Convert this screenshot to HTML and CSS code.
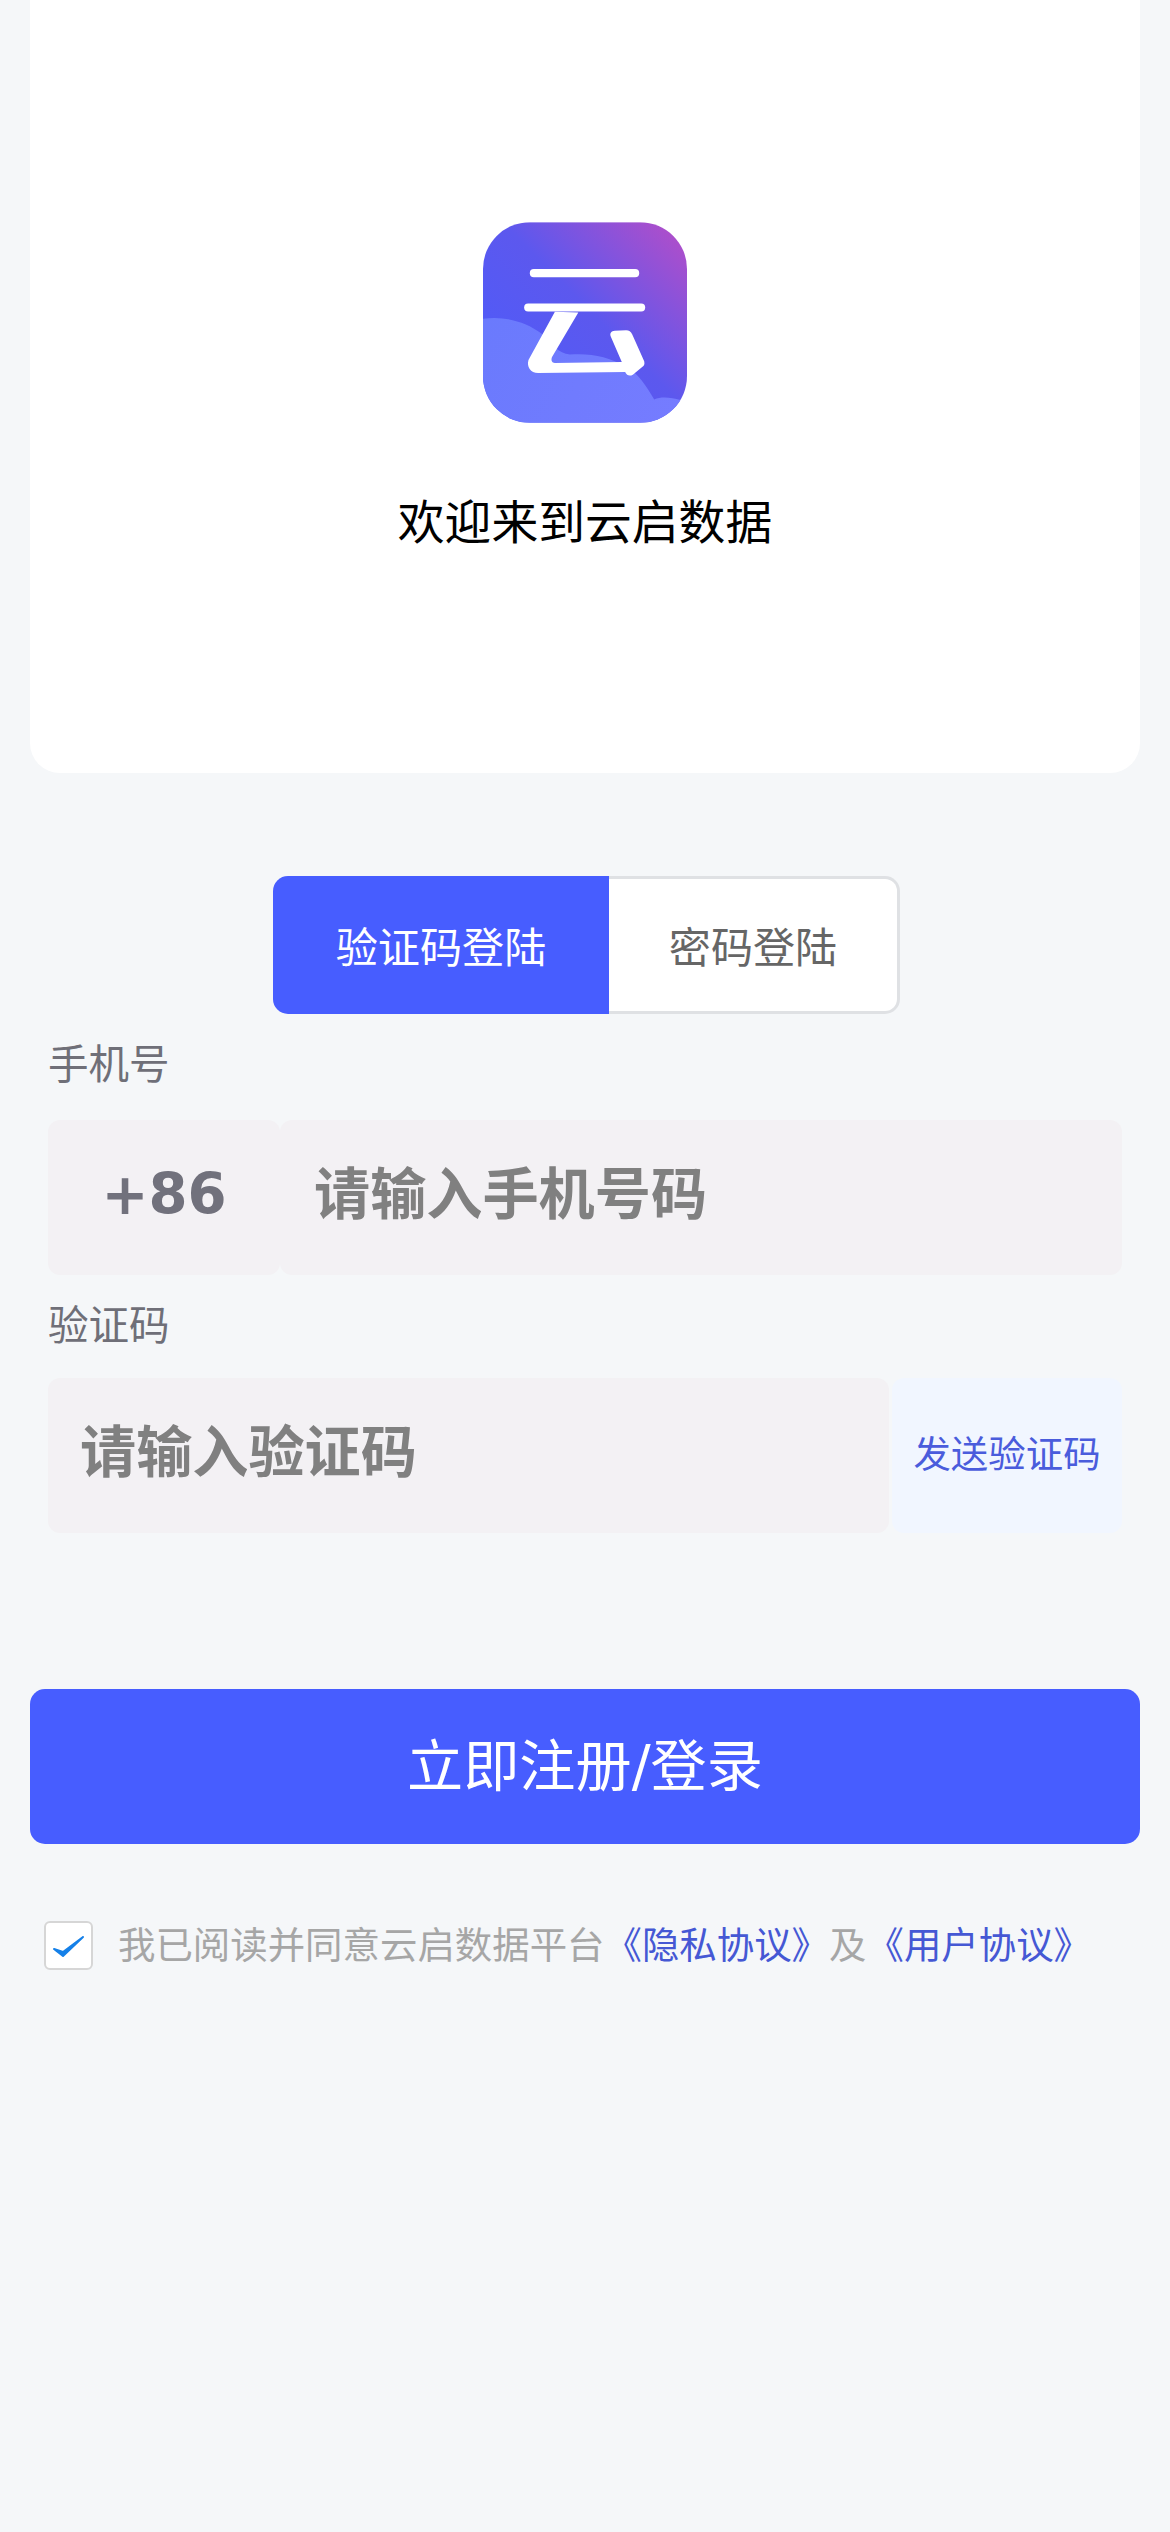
FILE: index.html
```html
<!DOCTYPE html>
<html lang="zh-CN">
<head>
<meta charset="utf-8">
<title>欢迎来到云启数据</title>
<link rel="stylesheet" href="styles.css">
</head>
<body>
<main class="page">
  <section class="hero">
    <svg class="logo" viewBox="0 0 610 600" aria-hidden="true">
      <defs>
        <linearGradient id="logoBg" x1="610" y1="0" x2="0" y2="600" gradientUnits="userSpaceOnUse">
          <stop offset="0" stop-color="#b84dc6"/>
          <stop offset="0.46" stop-color="#5c58ee"/>
          <stop offset="1" stop-color="#4a5cfd"/>
        </linearGradient>
        <linearGradient id="logoCloud" x1="0" y1="300" x2="610" y2="600" gradientUnits="userSpaceOnUse">
          <stop offset="0" stop-color="#6a7afd"/>
          <stop offset="1" stop-color="#767cff"/>
        </linearGradient>
        <clipPath id="logoClip"><rect width="610" height="600" rx="140"/></clipPath>
      </defs>
      <g clip-path="url(#logoClip)">
        <rect width="610" height="600" fill="url(#logoBg)"/>
        <path fill="url(#logoCloud)" d="M0 289C60 280 125 295 178 335C205 365 225 392 260 396C320 390 380 405 420 428C465 448 490 495 512 530C535 520 565 525 590 532L610 600H0Z"/>
      </g>
      <rect x="140" y="140" width="327" height="25" rx="12" fill="#fff"/>
      <rect x="123" y="243" width="362" height="24" rx="12" fill="#fff"/>
      <path fill="#fff" d="M215 268L285 270L206 404C203 414 206 421 215 421L415 418L382 342C378 332 384 326 394 325L428 323C437 323 442 327 446 335L482 416C484 424 482 430 476 433L448 456C438 462 430 458 425 448L165 451C142 451 130 432 136 412Z"/>
    </svg>
    <h1 class="welcome">欢迎来到云启数据</h1>
  </section>

  <div class="tabs">
    <button class="tab tab-active" type="button">验证码登陆</button>
    <button class="tab tab-idle" type="button">密码登陆</button>
  </div>

  <form class="form">
    <label class="field-label label-phone">手机号</label>
    <div class="field-row">
      <span class="prefix">+86</span>
      <input class="text-input input-phone" type="text" placeholder="请输入手机号码">
    </div>
    <label class="field-label label-code">验证码</label>
    <div class="field-row">
      <input class="text-input input-code" type="text" placeholder="请输入验证码">
      <button class="send" type="button">发送验证码</button>
    </div>
  </form>

  <button class="submit" type="button">立即注册/登录</button>

  <div class="agree">
    <span class="check">
      <svg viewBox="0 0 49 49" width="49" height="49" aria-hidden="true">
        <path d="M10 28L19 35L39 16L19 31Z" fill="#1580e8" stroke="#1580e8" stroke-width="2" stroke-linejoin="round"/>
      </svg>
    </span>
    <p class="agree-text">我已阅读并同意云启数据平台<a class="link">《隐私协议》</a>及<a class="link">《用户协议》</a></p>
  </div>
</main>
</body>
</html>
```

FILE: styles.css
```css
* {
  box-sizing: border-box;
}

html,
body {
  margin: 0;
  padding: 0;
  background: #f5f7f9;
}

body,
button,
input {
  font-family: "DejaVu Sans", "Noto Sans CJK SC", sans-serif;
}

.page {
  display: flex;
  flex-direction: column;
  width: 1170px;
  min-height: 2532px;
  padding: 0 30px;
}

.hero {
  display: flex;
  flex-direction: column;
  align-items: center;
  height: 773px;
  padding-top: 222px;
  background: #fff;
  border-radius: 0 0 30px 30px;
}

.logo {
  width: 204px;
  height: 201px;
}

.welcome {
  margin: 68px 0 0;
  font-size: 46.8px;
  line-height: 64px;
  font-weight: 400;
  color: #000;
}

.tabs {
  display: flex;
  align-self: flex-start;
  width: 627px;
  height: 138px;
  margin: 103px 0 0 243px;
}

.tab {
  height: 100%;
  padding: 0 0 2px;
  font-size: 42.12px;
}

.tab-active {
  width: 336px;
  border: 0;
  border-radius: 15px 0 0 15px;
  background: #475dff;
  color: #fff;
}

.tab-idle {
  flex: 1;
  border: 3px solid #dfe1e4;
  border-left: 0;
  border-radius: 0 15px 15px 0;
  background: #fff;
  color: #666;
}

.form {
  display: flex;
  flex-direction: column;
  padding: 0 18px;
}

.field-label {
  font-size: 40.56px;
  line-height: 56px;
  color: #6f6f78;
}

.label-phone {
  margin-top: 23px;
}

.label-code {
  margin-top: 23px;
}

.field-row {
  display: flex;
  height: 155px;
}

.label-phone + .field-row {
  margin-top: 27px;
}

.label-code + .field-row {
  margin-top: 24px;
}

.prefix {
  display: flex;
  align-items: center;
  justify-content: center;
  width: 232px;
  padding-bottom: 6px;
  background: #f3f1f4;
  border-radius: 12px;
  font-size: 56.16px;
  font-weight: 700;
  color: #71717c;
}

.text-input {
  min-width: 0;
  height: 100%;
  border: 0;
  outline: 0;
  background: #f3f1f4;
  border-radius: 12px;
  font-size: 56.16px;
  font-weight: 700;
  color: #333;
}

.text-input::placeholder {
  color: #808080;
  opacity: 1;
}

.input-phone {
  flex: 1;
  padding: 0 0 6px 34px;
}

.input-code {
  flex: 1;
  padding: 0 0 6px 32px;
}

.send {
  width: 230px;
  margin: 0 0 0 3px;
  padding: 0 0 8px;
  border: 0;
  border-radius: 12px;
  background: #f1f6ff;
  font-size: 37.44px;
  color: #4a5cdc;
}

.submit {
  height: 155px;
  margin-top: 156px;
  padding: 0 0 10px;
  border: 0;
  border-radius: 15px;
  background: #475dff;
  font-size: 56.16px;
  color: #fff;
}

.agree {
  display: flex;
  align-items: center;
  margin-top: 75px;
  padding-left: 14px;
}

.check {
  flex: none;
  width: 49px;
  height: 49px;
  border: 2px solid #d6d6d6;
  border-radius: 6px;
  background: #fff;
  overflow: hidden;
}

.check svg {
  display: block;
  margin: -2px;
}

.agree-text {
  margin: 3px 0 0 25px;
  font-size: 37.44px;
  line-height: 49px;
  color: #a6a6a6;
  white-space: nowrap;
}

.link {
  color: #4558d4;
}
```
